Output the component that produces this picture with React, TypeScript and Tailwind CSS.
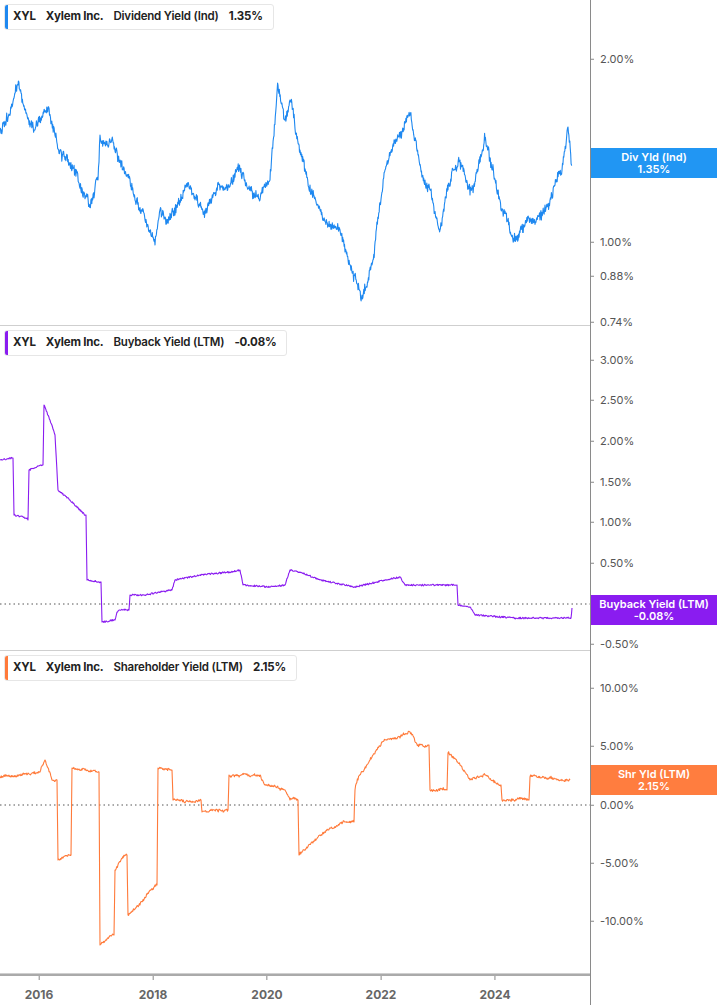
import React from "react";

type P = [number, number];
function rng(seed: number) {
  let s = seed;
  return () => {
    s = (s * 1103515245 + 12345) & 0x7fffffff;
    return s / 0x7fffffff;
  };
}
function series(a: P[], seed: number, noise: number, step = 0.6, walk = 0): string {
  const r = rng(seed);
  let d = `M${a[0][0]},${a[0][1]}`;
  let w = 0;
  for (let i = 1; i < a.length; i++) {
    const [x0, y0] = a[i - 1];
    const [x1, y1] = a[i];
    const n = Math.max(1, Math.round((x1 - x0) / step));
    for (let k = 1; k <= n; k++) {
      const t = k / n;
      w = w * 0.9 + (r() - 0.5) * walk;
      const j = k === n || x1 === x0 ? 0 : (r() - 0.5) * noise + w;
      d += `L${(x0 + (x1 - x0) * t).toFixed(1)},${(y0 + (y1 - y0) * t + j).toFixed(1)}`;
    }
  }
  return d;
}

const blue: P[] = [[0,130],[8,118],[18,85],[25,110],[35,130],[45,112],[60,150],[75,170],[90,205],[98,180],[100,135],[110,140],[120,160],[135,200],[145,220],[155,245],[160,210],[175,215],[185,185],[195,200],[205,210],[220,190],[240,170],[250,190],[260,200],[270,180],[278,85],[285,120],[290,100],[300,150],[310,185],[320,210],[330,225],[340,230],[350,265],[362,295],[372,265],[385,170],[395,140],[410,115],[418,155],[425,180],[432,200],[440,230],[448,190],[460,160],[470,195],[478,170],[485,140],[492,170],[500,200],[515,240],[525,225],[540,220],[550,200],[555,185],[562,170],[568,127],[572,165]];
const purple: P[] = [[0,460],[12,458],[13,458],[14,515],[27,518],[28,520],[29,470],[41,465],[43,465],[44,405],[50,420],[55,435],[58,490],[70,500],[85,515],[86,515],[87,580],[100,582],[101,582],[102,622],[115,620],[117,612],[120,610],[129,610],[130,595],[145,595],[160,592],[172,590],[175,580],[200,575],[230,572],[240,570],[243,585],[270,587],[285,585],[290,570],[300,572],[320,580],[355,587],[385,580],[400,577],[405,585],[430,585],[455,585],[457,585],[458,605],[470,607],[475,615],[515,618],[570,618],[571,618],[572,608]];
const orange: P[] = [[0,777],[40,772],[45,760],[52,780],[57,780],[58,860],[70,855],[71,855],[72,768],[85,770],[98,772],[99,772],[100,945],[112,935],[114,935],[115,870],[125,855],[127,855],[128,915],[140,905],[155,885],[157,885],[158,768],[170,770],[172,770],[173,800],[200,800],[201,800],[202,812],[225,810],[228,810],[229,775],[260,775],[265,785],[285,790],[290,800],[298,800],[299,855],[320,835],[345,822],[354,822],[355,790],[358,780],[370,760],[385,740],[400,738],[410,732],[418,745],[428,745],[429,745],[430,790],[445,790],[447,790],[448,753],[460,765],[470,780],[485,775],[500,785],[501,785],[502,800],[528,800],[529,800],[530,777],[560,780],[570,780]];

const bluePath = series(blue, 7, 8, 0.45, 5);
const purplePath = series(purple, 11, 1.6, 0.6);
const orangePath = series(orange, 23, 2.2, 0.6, 1.2);

const font = { fontFamily: "Inter, 'Liberation Sans', sans-serif" };

function Legend({ color, label, value }: { color: string; label: string; value: string }) {
  return (
    <div className="absolute left-[4px] top-[4px] flex items-center h-[26px] bg-white border border-[#e6e6e6] rounded-[3px] overflow-hidden text-[11.5px] font-bold text-[#222] tracking-[-0.2px]">
      <div className="w-[3px] h-full" style={{ background: color }} />
      <span className="pl-[5px]">XYL</span>
      <span className="pl-[10px]">Xylem Inc.</span>
      <span className="pl-[10px] font-semibold">{label}</span>
      <span className="pl-[10px] pr-[10px]">{value}</span>
    </div>
  );
}

function Axis({ top, labels, tag }: { top: number; labels: [string, number][]; tag: { y: number; color: string; lines: string[] } }) {
  return (
    <div className="relative w-[127px] h-full border-l border-[#8a8a8a]">
      {labels.map(([t, y]) => (
        <div key={t} className="absolute left-0 flex items-center text-[11px] text-[#555] -translate-y-1/2" style={{ top: y - top }}>
          <span className="w-[3px] h-px bg-[#888] mr-[6px]" />
          {t}
        </div>
      ))}
      <div className="absolute left-0 right-0 h-[30px] flex flex-col items-center justify-center text-white text-[11px] font-semibold leading-[12px]" style={{ top: tag.y - top, background: tag.color }}>
        {tag.lines.map((l) => <span key={l}>{l}</span>)}
      </div>
    </div>
  );
}

function Panel({ top, h, path, color, zero, legend, axis }: any) {
  return (
    <div className="flex" style={{ height: h }}>
      <div className="relative w-[590px] h-full border-b border-[#cfcfcf]">
        <svg width="590" height={h} viewBox={`0 ${top} 590 ${h}`} className="block">
          {zero != null && <line x1="0" x2="590" y1={zero} y2={zero} stroke="#555" strokeDasharray="1.5 3" />}
          <path d={path} fill="none" stroke={color} strokeWidth="1.1" strokeLinejoin="round" />
        </svg>
        {legend}
      </div>
      {axis}
    </div>
  );
}

export default function App() {
  return (
    <div className="w-[717px] h-[1005px] bg-white overflow-hidden" style={font}>
      <Panel top={0} h={326} path={bluePath} color="#1e88f0"
        legend={<Legend color="#1e88f0" label="Dividend Yield (Ind)" value="1.35%" />}
        axis={<Axis top={0} labels={[["2.00%", 59], ["1.00%", 242], ["0.88%", 276], ["0.74%", 322]]} tag={{ y: 148, color: "#2196f3", lines: ["Div Yld (Ind)", "1.35%"] }} />} />
      <Panel top={326} h={325} path={purplePath} color="#8a1cf0" zero={604}
        legend={<Legend color="#8a1cf0" label="Buyback Yield (LTM)" value="-0.08%" />}
        axis={<Axis top={326} labels={[["3.00%", 360], ["2.50%", 400], ["2.00%", 441], ["1.50%", 482], ["1.00%", 522], ["0.50%", 563], ["-0.50%", 644]]} tag={{ y: 595, color: "#8a1cf0", lines: ["Buyback Yield (LTM)", "-0.08%"] }} />} />
      <Panel top={651} h={323} path={orangePath} color="#ff7a3a" zero={805}
        legend={<Legend color="#ff7a3a" label="Shareholder Yield (LTM)" value="2.15%" />}
        axis={<Axis top={651} labels={[["10.00%", 688], ["5.00%", 746], ["0.00%", 805], ["-5.00%", 863], ["-10.00%", 921]]} tag={{ y: 765, color: "#ff7d3f", lines: ["Shr Yld (LTM)", "2.15%"] }} />} />
      <div className="flex h-[31px]">
        <div className="relative w-[590px] border-t-2 border-[#aaa]">
          {[["2016", 39], ["2018", 153], ["2020", 267], ["2022", 381], ["2024", 495]].map(([t, x]) => (
            <div key={t} className="absolute top-0 flex flex-col items-center -translate-x-1/2" style={{ left: Number(x) }}>
              <span className="w-px h-[4px] bg-[#888]" />
              <span className="text-[12px] font-bold text-[#666] mt-[6px]">{t}</span>
            </div>
          ))}
        </div>
        <div className="w-[127px] border-l border-[#8a8a8a]" />
      </div>
    </div>
  );
}
